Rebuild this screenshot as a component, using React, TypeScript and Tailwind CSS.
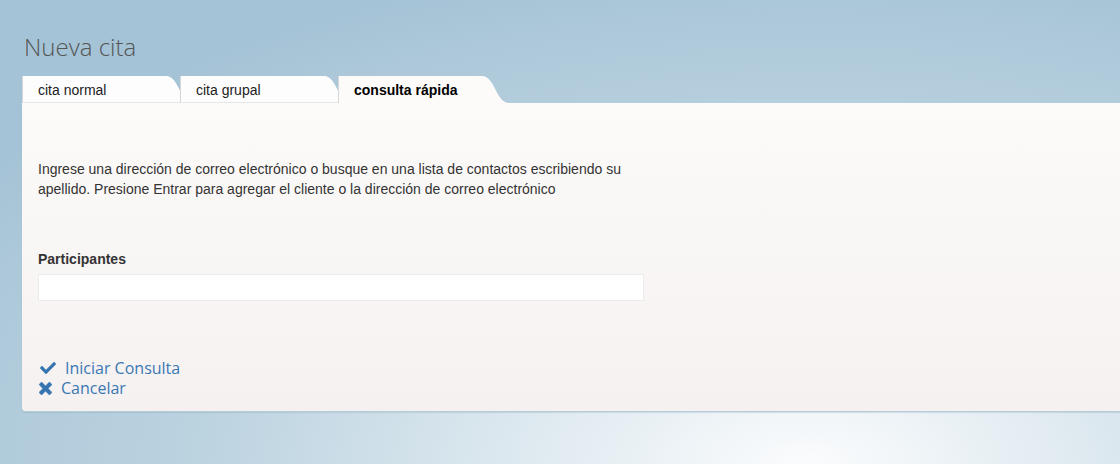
import React from 'react';
import clsx from 'clsx';
import { FaCheck } from 'react-icons/fa';

interface TabProps {
  label: string;
  active?: boolean;
  first?: boolean;
}

const Tab: React.FC<TabProps> = ({ label, active, first }) => {
  const fill = active ? '#fcfbfa' : '#fdfdfd';
  return (
    <div className={clsx('relative flex h-[27px]', !first && '-ml-[13px]')}>
      <div
        className={clsx(
          'w-[144px] border-l border-[#d6d6d6] pl-[15px] pt-[1px] text-[14px] leading-[26px] text-[#222]',
          active ? 'bg-[#fcfbfa] font-bold text-black' : 'border-b border-b-[#e6e6e6] bg-[#fdfdfd]'
        )}
      >
        {label}
      </div>
      <svg width="27" height="27" viewBox="0 0 27 27" className="block">
        <path d="M0 0 C13 0 14 27 27 27 L0 27 Z" fill={fill} />
        {!active && <line x1="0" y1="26.5" x2="27" y2="26.5" stroke="#e6e6e6" />}
      </svg>
    </div>
  );
};

// bold cross, like the old icon-font "times"
const CrossIcon = () => (
  <svg width="13" height="13" viewBox="0 0 13 13" className="shrink-0">
    <path
      d="M2.6 0 L6.5 3.9 L10.4 0 L13 2.6 L9.1 6.5 L13 10.4 L10.4 13 L6.5 9.1 L2.6 13 L0 10.4 L3.9 6.5 L0 2.6 Z"
      fill="#3674b0"
      stroke="#3674b0"
      strokeWidth="0.6"
      strokeLinejoin="round"
    />
  </svg>
);

export default function App() {
  return (
    <div className="h-[464px] w-[1120px] overflow-hidden bg-[radial-gradient(ellipse_90%_110%_at_72%_100%,#fbfcfd_0%,#dce8ef_30%,#bcd3e0_60%,#a5c3d6_100%)] pl-[22px] pt-[31px] font-['Liberation_Sans',Arial,sans-serif]">
      <h1 className="pl-[2px] font-['Open_Sans',sans-serif] text-[24px] font-light leading-[32px] text-[#555]">
        Nueva cita
      </h1>

      <div className="mt-[13px] flex">
        <Tab label="cita normal" first />
        <Tab label="cita grupal" />
        <Tab label="consulta rápida" active />
      </div>

      <div className="rounded-bl-[4px] border-b border-[#b7cbd8] bg-gradient-to-b from-[#fcfbfa] to-[#f5f1f0] pb-[13px] pl-4 pt-[56px] shadow-[0_1px_1px_rgba(120,150,170,0.25)]">
        <p className="w-[620px] text-[14px] leading-[20px] text-[#333]">
          Ingrese una dirección de correo electrónico o busque en una lista de contactos escribiendo su
          apellido. Presione Entrar para agregar el cliente o la dirección de correo electrónico
        </p>

        <label className="mt-[50px] block text-[14px] font-bold leading-[20px] text-[#333]">
          Participantes
        </label>
        <input
          type="text"
          className="mt-[5px] block h-[27px] w-[606px] border border-[#ececec] bg-white px-2 text-[14px] outline-none"
        />

        <div className="mt-[57px] font-['Open_Sans',sans-serif] text-[16px] leading-[20px] text-[#3a78b4]">
          <a href="#" className="flex items-center">
            <FaCheck className="ml-[2px] h-[16px] w-[16px] text-[#3674b0]" />
            <span className="ml-[9px]">Iniciar Consulta</span>
          </a>
          <a href="#" className="flex items-center">
            <span className="ml-[1px] flex">
              <CrossIcon />
            </span>
            <span className="ml-[9px]">Cancelar</span>
          </a>
        </div>
      </div>
    </div>
  );
}
